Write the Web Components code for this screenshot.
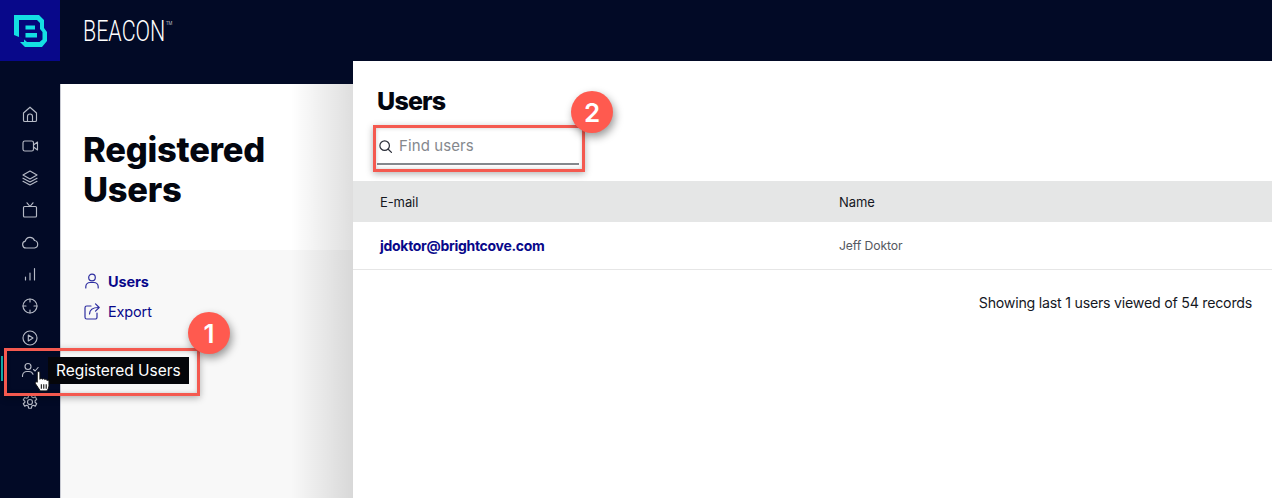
<!DOCTYPE html>
<html lang="en"><head><meta charset="utf-8"><title>Beacon</title>
<style>
html,body{margin:0;height:498px;overflow:hidden;background:#020a26}
body{font-family:Inter,"Liberation Sans",sans-serif}
</style></head><body>
<beacon-app></beacon-app>
<script>
const I={
home:'<path d="M3.500 9 10 3.200 16.500 9v7.200a1.300 1.300 0 0 1-1.300 1.300H4.800a1.300 1.300 0 0 1-1.300-1.300z"/><path d="M7.500 17.500v-5a2.500 2.500 0 0 1 5 0v5"/>',
video:'<rect x="3" y="5" width="10.500" height="10" rx="1.800"/><path d="M13.500 9 17.500 6v8l-4-3"/>',
layers:'<path d="M10 3 17 7l-7 4-7-4z"/><path d="M3 10.200 10 14l7-3.800"/><path d="M3 13.300 10 17l7-3.700"/>',
tv:'<rect x="3.500" y="6.500" width="13" height="10.500" rx="1"/><path d="M7 2.800 10 6.500l3-3.700"/>',
cloud:'<path d="M6 16a3.500 3.500 0 0 1-.7-6.900 4.800 4.800 0 0 1 9.200-.6A3.800 3.800 0 0 1 14.500 16z"/>',
bars:'<path d="M5.500 16v-3M10 16V9M14.500 16V4.500"/>',
target:'<circle cx="10" cy="10" r="7"/><path d="M10 3v3M10 14v3M3 10h3M14 10h3"/>',
play:'<circle cx="10" cy="10" r="7"/><path d="M8.300 7v6l4.700-3z"/>',
usercheck:'<circle cx="8" cy="6.500" r="3"/><path d="M2.500 16.500v-.8a4.500 4.500 0 0 1 4.500-4.200h2a4.500 4.500 0 0 1 4 2.700"/><path d="m13.500 9.500 1.600 1.500 3-3.500"/>',
gear:'<circle cx="10" cy="10" r="2.500"/><path d="M8.600 2.800h2.800l.4 2.100 1.500.8 2-.8 1.400 2.400-1.600 1.400v1.600l1.600 1.400-1.400 2.400-2-.8-1.500.8-.4 2.100H8.600l-.4-2.100-1.500-.8-2 .8-1.400-2.400 1.600-1.400V9.300L3.300 7.900l1.400-2.400 2 .8 1.500-.8z"/>',
user:'<circle cx="10" cy="6.500" r="3.300"/><path d="M3.800 17v-1.300a4.300 4.300 0 0 1 4.300-4.200h3.800a4.300 4.300 0 0 1 4.300 4.200V17"/>',
share:'<path d="M9 5H4.800A1.800 1.800 0 0 0 3 6.800v9.400A1.800 1.800 0 0 0 4.800 18h8.400a1.800 1.800 0 0 0 1.800-1.800V12"/><path d="M7.500 13c.2-4 3-6.500 9-6.500"/><path d="m13.500 2.800 3.700 3.700-3.700 3.700"/>',
search:'<circle cx="9" cy="9" r="5.600"/><path d="m13.200 13.200 3.800 3.800"/>'
};
function def(name,css,html){
  customElements.define(name,class extends HTMLElement{
    connectedCallback(){
      if(this.shadowRoot)return;
      const r=this.attachShadow({mode:'open'});
      r.innerHTML='<style>'+css+'</style>'+(typeof html==='function'?html(this):html);
    }
  });
}
def('ui-icon',':host{display:inline-flex;width:var(--s,20px);height:var(--s,20px);flex:none}svg{width:100%;height:100%;fill:none;stroke:currentColor;stroke-width:var(--w,1.300);stroke-linecap:round;stroke-linejoin:round}',
  e=>'<svg viewBox="0 0 20 20">'+I[e.getAttribute('name')]+'</svg>');
def('top-bar',`:host{display:flex;height:61px;background:#020a26;color:#fff;flex:none}
.logo{width:60px;height:61px;background:#08088a;flex:none}
.logo svg{display:block}
.name{margin-left:23px;font:300 30px/61px "Roboto",sans-serif;transform:scaleX(.715);transform-origin:left;display:flex;height:61px}
sup{font-size:6px;line-height:10px;margin:18px 0 0 1px;height:10px}`,
`<div class="logo"><svg width="60" height="61" viewBox="0 0 60 61"><path fill="#14dfe3" d="M14 15H39L44 20V28L47 32V41L42 47H25L20 42H36L38 40V35L36 33H19V37L14 35Z"/><path fill="#14dfe3" d="M19 20V33L24 33V24H36L37 25V28L35 29.500H26V33H36L41 29V23L38 20Z"/><path fill="#14dfe3" d="M24 36H40V42H24Z"/><path fill="#06067a" d="M19 20H37L40 23V29L42.500 32V39.500L39.500 42H27L19 35Z"/><path fill="#14dfe3" d="M25.500 25.500H35V29.500H25.500ZM25.500 33H37V37.500H25.500Z"/></svg></div>
<div class="name">BEACON<sup>TM</sup></div>`);
def('side-rail',`:host{display:flex;flex-direction:column;align-items:center;width:60px;flex:none;box-sizing:border-box;padding-top:43px;gap:12px;color:#b6bac6;position:relative}
ui-icon{--s:20px;--w:1.150}
.mark{position:absolute;left:1px;top:295px;width:2px;height:25px;background:#16b9b5}`,
`<div class="mark"></div>`+['home','video','layers','tv','cloud','bars','target','play','usercheck','gear'].map(n=>`<ui-icon name="${n}"></ui-icon>`).join(''));
def('nav-item',`:host{display:flex;align-items:center;gap:6px;height:30px;color:#08088a;font-size:14.500px;letter-spacing:-.15px}
:host([active]){font-weight:700}
ui-icon{--s:20px;--w:1.200;color:#2d2da0}`,e=>`<ui-icon name="${e.getAttribute('icon')}"></ui-icon><slot></slot>`);
def('left-panel',`:host{display:flex;flex-direction:column;width:293px;flex:none;margin-top:23px;background:#f8f8f8;position:relative;box-shadow:inset 1px 0 0 #c9cbd3}
.head{height:166px;box-sizing:border-box;padding:46px 23px 0;background:#fff;box-shadow:inset 1px 0 0 #c9cbd3}
h1{margin:0;font-size:34.500px;line-height:40px;font-weight:800;color:#03060f;letter-spacing:-.25px}
nav{padding:16px 0 0 22px}
.fade{position:absolute;right:0;top:0;bottom:0;width:62px;background:linear-gradient(90deg,rgba(0,0,0,0),rgba(0,0,0,.13))}`,
`<div class="head"><h1>Registered<br>Users</h1></div><nav><nav-item active icon="user">Users</nav-item><nav-item icon="share">Export</nav-item></nav><div class="fade"></div>`);
def('users-panel',`:host{display:flex;flex-direction:column;flex:1;background:#fff;color:#111}
h2{margin:0;padding:28px 0 0 24px;height:25px;font-size:25px;line-height:25px;font-weight:800;letter-spacing:-.8px;color:#03060f}
.find{display:flex;align-items:flex-start;box-sizing:border-box;margin:14px 0 0 24px;width:202px;height:37px;border-bottom:2px solid #85888d;color:#85888d;font-size:15px;gap:5px;padding-top:8px;letter-spacing:.1px}
.find ui-icon{--s:17px;--w:1.400;color:#2a2e38;margin-top:2px}
.row{display:grid;grid-template-columns:459px 1fr;align-items:center;padding-left:27px}
.hd{margin-top:16px;height:41px;background:#e5e6e6;font-size:13px;color:#15181f;letter-spacing:-.1px}
.bd{height:47px;border-bottom:1px solid #e6e6e6;font-size:12.200px;color:#555860;letter-spacing:-.1px}
.bd b{font-size:14px;font-weight:700;color:#08088a;letter-spacing:-.3px}
.foot{text-align:right;padding:24px 20px 0 0;font-size:14.200px;line-height:18px;letter-spacing:-.23px;color:#15181f}`,
`<h2>Users</h2><div class="find"><ui-icon name="search"></ui-icon><span>Find users</span></div>
<div class="row hd"><span>E-mail</span><span>Name</span></div>
<div class="row bd"><b>jdoktor@brightcove.com</b><span>Jeff Doktor</span></div>
<div class="foot">Showing last 1 users viewed of 54 records</div>`);
def('call-out',`:host{position:absolute;display:block;box-sizing:border-box;border:3px solid #f4594f;box-shadow:0 2px 7px rgba(0,0,0,.3),inset 0 0 4px rgba(0,0,0,.2)}`,`<slot></slot>`);
def('step-badge',`:host{position:absolute;display:flex;align-items:center;justify-content:center;width:42px;height:42px;border-radius:50%;background:#ff5a4f;color:#fff;font-size:26px;font-weight:600;box-shadow:2px 4px 8px rgba(0,0,0,.4)}`,`<slot></slot>`);
def('tool-tip',`:host{position:absolute;display:flex;align-items:center;background:#05060a;color:#fff;font-size:15.500px;white-space:nowrap;box-sizing:border-box;padding-left:8px;letter-spacing:-.05px}`,`<slot></slot>`);
def('beacon-app',`:host{display:flex;flex-direction:column;width:1272px;height:498px;position:relative;overflow:hidden;background:#020a26}
.main{display:flex;flex:1}
svg.cur{position:absolute;left:34px;top:371px}`,
`<top-bar></top-bar><div class="main"><side-rail></side-rail><left-panel></left-panel><users-panel></users-panel></div>
<call-out style="left:4px;top:348px;width:196px;height:48px"></call-out>
<call-out style="left:373px;top:125px;width:212px;height:47px"></call-out>
<tool-tip style="left:48px;top:357px;width:141px;height:27px">Registered Users</tool-tip>
<step-badge style="left:188px;top:312px">1</step-badge>
<step-badge style="left:571px;top:91px">2</step-badge>
<svg class="cur" width="18" height="21" viewBox="0 0 16 19"><path fill="#fff" stroke="#111" stroke-width=".9" stroke-linejoin="round" d="M2.800 1.500c0-1.300 2.400-1.300 2.400 0V7.500c.4-.9 2-.9 2.200 0 .4-.8 2-.8 2.200.3.500-.6 2-.3 2 .8.500-.3 1.800-.1 1.800.9V13c0 2-.8 3.500-1.800 5H5.500C4 16 2.700 13.500 1.200 11.500c-.8-1.200.6-2.400 1.600-1.300z"/><path stroke="#111" stroke-width="1" d="M6.500 12v4M8.700 12v4M10.900 12v4"/></svg>`);
</script></body></html>
